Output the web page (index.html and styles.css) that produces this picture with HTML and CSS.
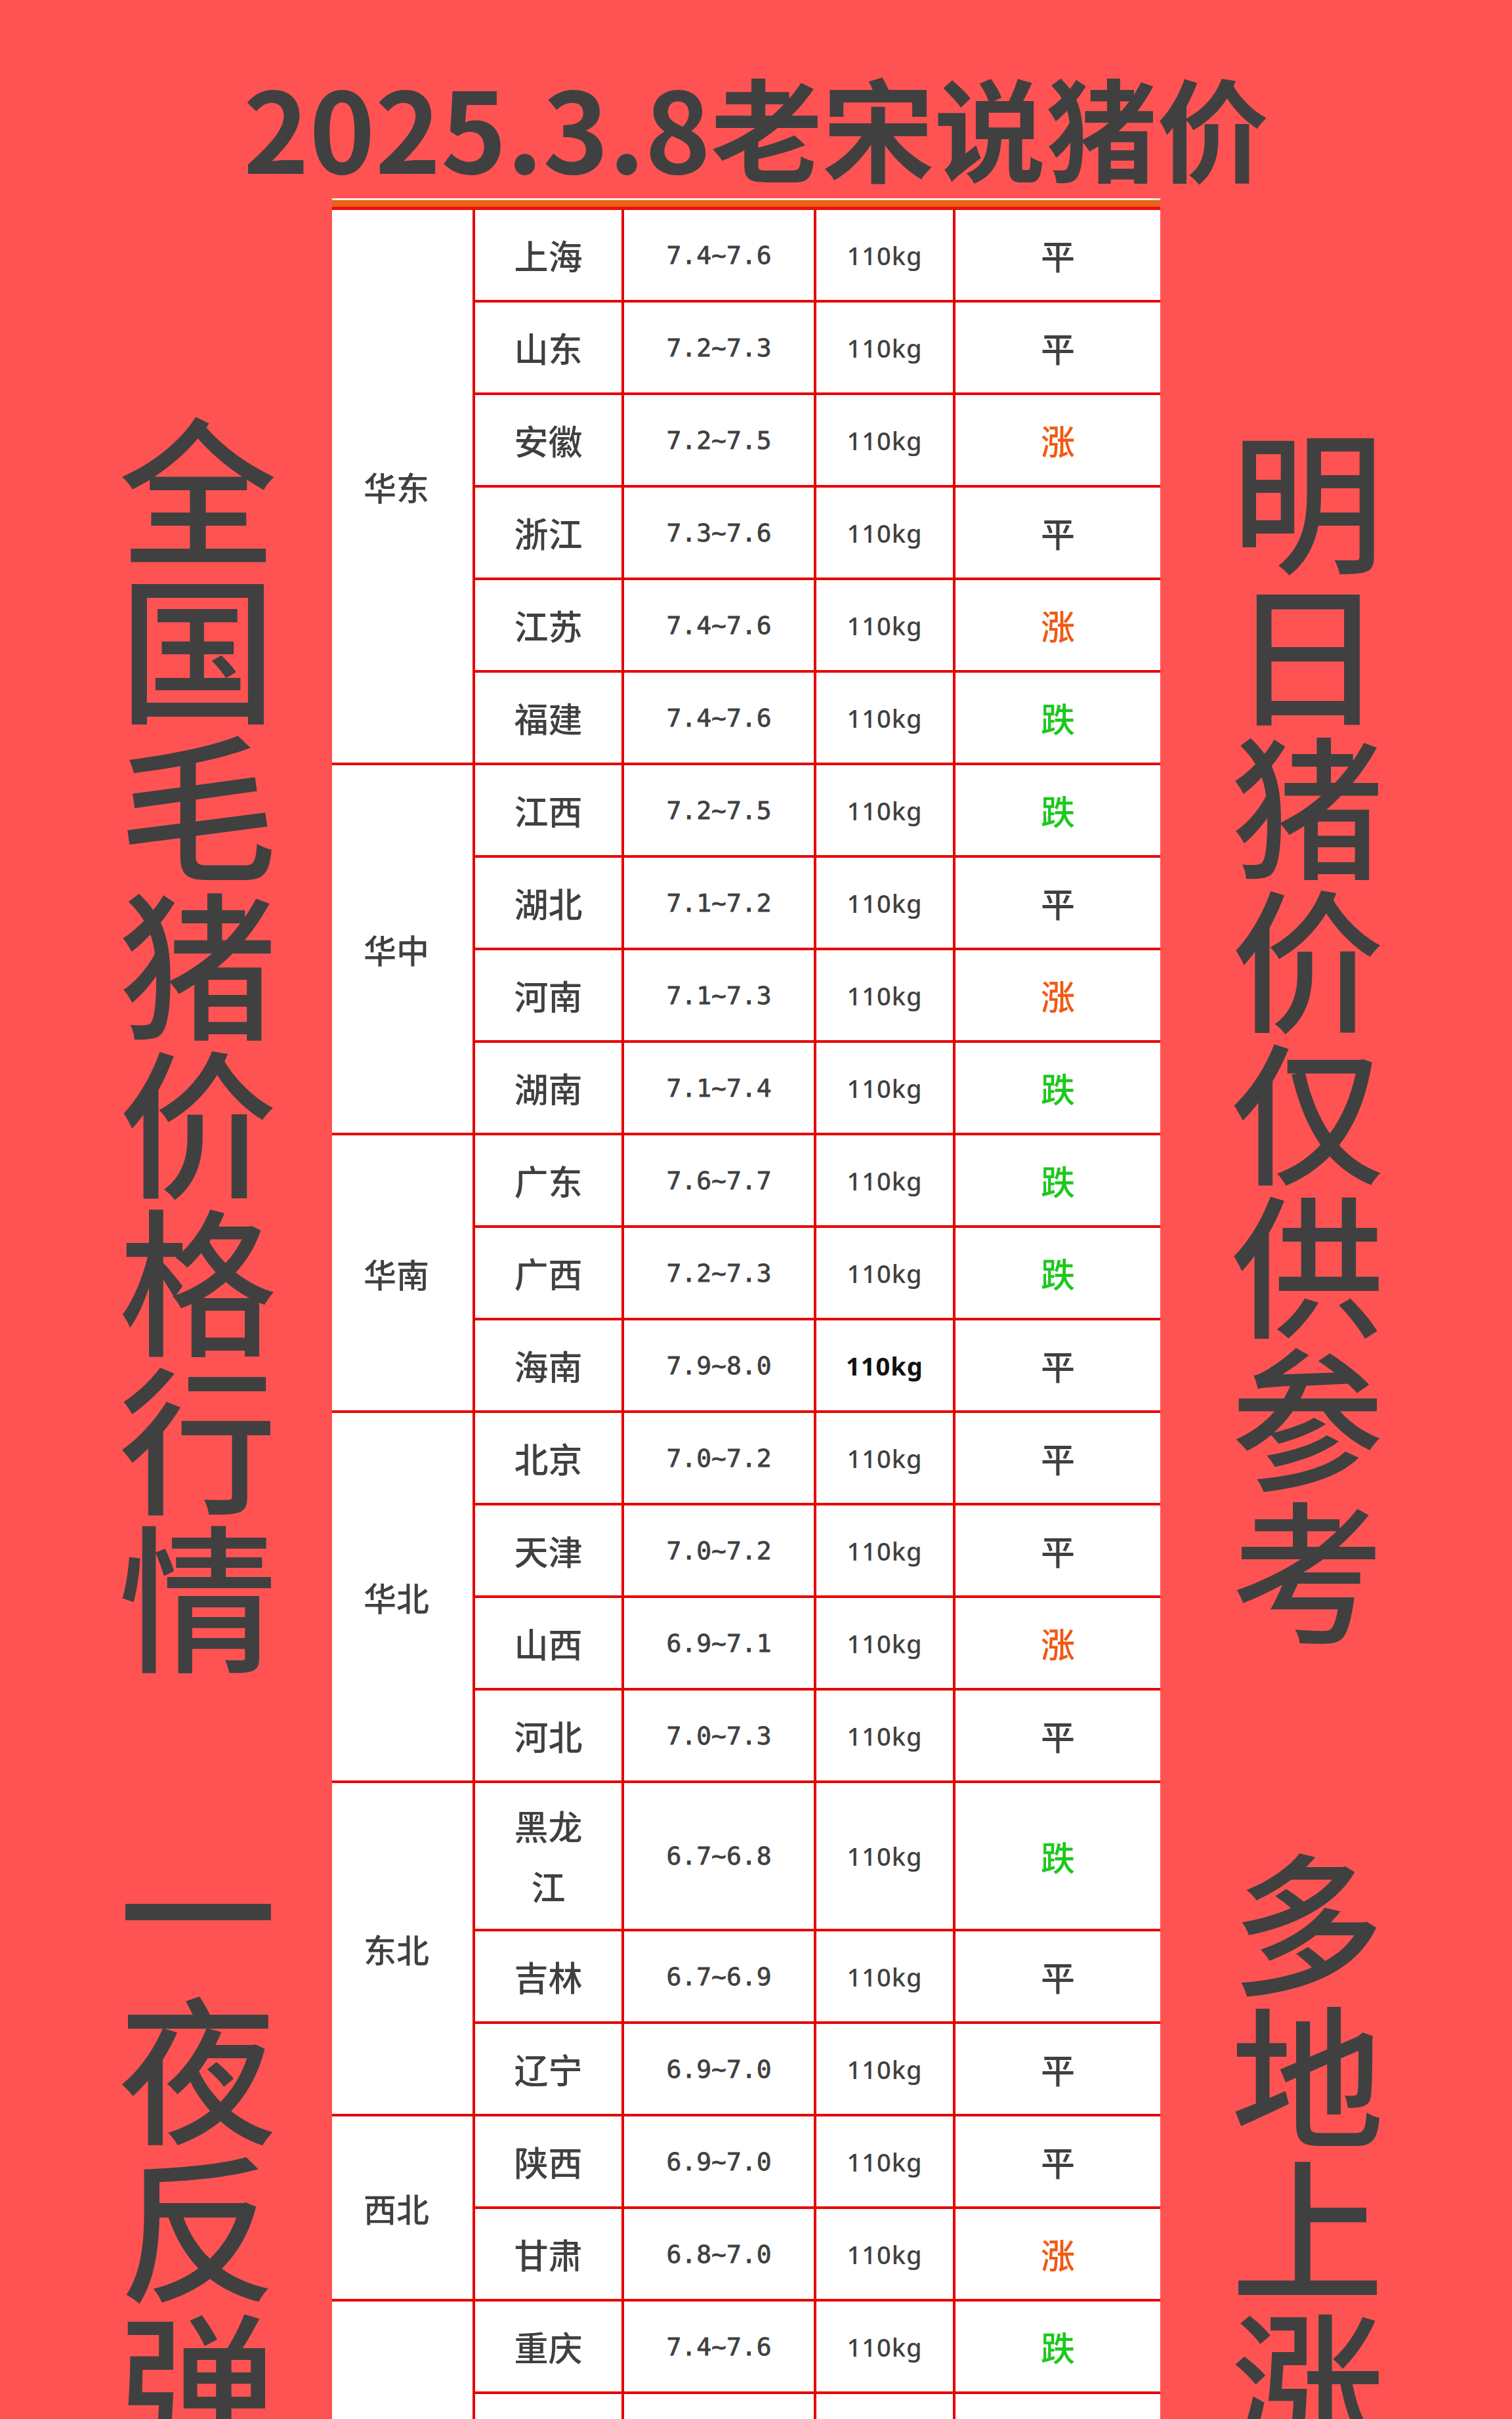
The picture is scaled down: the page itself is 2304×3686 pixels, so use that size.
FILE: index.html
```html
<!DOCTYPE html>
<html lang="zh-CN">
<head>
<meta charset="utf-8">
<title>2025.3.8老宋说猪价</title>
<link rel="stylesheet" href="styles.css">
</head>
<body>
<div class="page">
  <h1 class="title">2025.3.8老宋说猪价</h1>
  <div class="main">
    <div class="side side-left">
      <div class="vtext">全国毛猪价格行情</div>
      <div class="vtext vtext-second">一夜反弹</div>
    </div>

    <div class="sheet">
      <div class="sheet-head"></div>

      <div class="group">
        <div class="region">华东</div>
        <div class="rows">
          <div class="row"><div class="c prov">上海</div><div class="c price">7.4~7.6</div><div class="c wt">110kg</div><div class="c trend flat">平</div></div>
          <div class="row"><div class="c prov">山东</div><div class="c price">7.2~7.3</div><div class="c wt">110kg</div><div class="c trend flat">平</div></div>
          <div class="row"><div class="c prov">安徽</div><div class="c price">7.2~7.5</div><div class="c wt">110kg</div><div class="c trend up">涨</div></div>
          <div class="row"><div class="c prov">浙江</div><div class="c price">7.3~7.6</div><div class="c wt">110kg</div><div class="c trend flat">平</div></div>
          <div class="row"><div class="c prov">江苏</div><div class="c price">7.4~7.6</div><div class="c wt">110kg</div><div class="c trend up">涨</div></div>
          <div class="row"><div class="c prov">福建</div><div class="c price">7.4~7.6</div><div class="c wt">110kg</div><div class="c trend down">跌</div></div>
        </div>
      </div>

      <div class="group">
        <div class="region">华中</div>
        <div class="rows">
          <div class="row"><div class="c prov">江西</div><div class="c price">7.2~7.5</div><div class="c wt">110kg</div><div class="c trend down">跌</div></div>
          <div class="row"><div class="c prov">湖北</div><div class="c price">7.1~7.2</div><div class="c wt">110kg</div><div class="c trend flat">平</div></div>
          <div class="row"><div class="c prov">河南</div><div class="c price">7.1~7.3</div><div class="c wt">110kg</div><div class="c trend up">涨</div></div>
          <div class="row"><div class="c prov">湖南</div><div class="c price">7.1~7.4</div><div class="c wt">110kg</div><div class="c trend down">跌</div></div>
        </div>
      </div>

      <div class="group">
        <div class="region">华南</div>
        <div class="rows">
          <div class="row"><div class="c prov">广东</div><div class="c price">7.6~7.7</div><div class="c wt">110kg</div><div class="c trend down">跌</div></div>
          <div class="row"><div class="c prov">广西</div><div class="c price">7.2~7.3</div><div class="c wt">110kg</div><div class="c trend down">跌</div></div>
          <div class="row"><div class="c prov">海南</div><div class="c price">7.9~8.0</div><div class="c wt wt-dark">110kg</div><div class="c trend flat">平</div></div>
        </div>
      </div>

      <div class="group">
        <div class="region">华北</div>
        <div class="rows">
          <div class="row"><div class="c prov">北京</div><div class="c price">7.0~7.2</div><div class="c wt">110kg</div><div class="c trend flat">平</div></div>
          <div class="row"><div class="c prov">天津</div><div class="c price">7.0~7.2</div><div class="c wt">110kg</div><div class="c trend flat">平</div></div>
          <div class="row"><div class="c prov">山西</div><div class="c price">6.9~7.1</div><div class="c wt">110kg</div><div class="c trend up">涨</div></div>
          <div class="row"><div class="c prov">河北</div><div class="c price">7.0~7.3</div><div class="c wt">110kg</div><div class="c trend flat">平</div></div>
        </div>
      </div>

      <div class="group">
        <div class="region">东北</div>
        <div class="rows">
          <div class="row row-tall"><div class="c prov prov-wrap">黑龙<br>江</div><div class="c price">6.7~6.8</div><div class="c wt">110kg</div><div class="c trend down">跌</div></div>
          <div class="row"><div class="c prov">吉林</div><div class="c price">6.7~6.9</div><div class="c wt">110kg</div><div class="c trend flat">平</div></div>
          <div class="row"><div class="c prov">辽宁</div><div class="c price">6.9~7.0</div><div class="c wt">110kg</div><div class="c trend flat">平</div></div>
        </div>
      </div>

      <div class="group">
        <div class="region">西北</div>
        <div class="rows">
          <div class="row"><div class="c prov">陕西</div><div class="c price">6.9~7.0</div><div class="c wt">110kg</div><div class="c trend flat">平</div></div>
          <div class="row"><div class="c prov">甘肃</div><div class="c price">6.8~7.0</div><div class="c wt">110kg</div><div class="c trend up">涨</div></div>
        </div>
      </div>

      <div class="group">
        <div class="region">西南</div>
        <div class="rows">
          <div class="row"><div class="c prov">重庆</div><div class="c price">7.4~7.6</div><div class="c wt">110kg</div><div class="c trend down">跌</div></div>
          <div class="row"><div class="c prov">四川</div><div class="c price">7.3~7.5</div><div class="c wt">110kg</div><div class="c trend flat">平</div></div>
          <div class="row"><div class="c prov">贵州</div><div class="c price">7.2~7.4</div><div class="c wt">110kg</div><div class="c trend flat">平</div></div>
          <div class="row"><div class="c prov">云南</div><div class="c price">7.1~7.3</div><div class="c wt">110kg</div><div class="c trend flat">平</div></div>
        </div>
      </div>
    </div>

    <div class="side side-right">
      <div class="vtext vtext-r">明日猪价仅供参考</div>
      <div class="vtext vtext-r vtext-r-second">多地上涨</div>
    </div>
  </div>
</div>
</body>
</html>
```

FILE: styles.css
```css
html, body {
  margin: 0;
  padding: 0;
  background: #ff5353;
}

.page {
  width: 2304px;
  height: 3686px;
  overflow: hidden;
  background: #ff5353;
  color: #404040;
  font-family: "Noto Sans CJK SC", "Noto Sans", sans-serif;
}

.title {
  margin: 0;
  padding-top: 106px;
  height: 170px;
  font-size: 170px;
  line-height: 170px;
  font-weight: 700;
  text-align: center;
  color: #404040;
  white-space: nowrap;
}

.main {
  margin-top: 26px;
  display: flex;
  align-items: flex-start;
}

.side {
  flex: none;
  display: flex;
  flex-direction: column;
  align-items: flex-start;
}

.side-left {
  width: 506px;
  box-sizing: border-box;
  padding-top: 328px;
  padding-left: 181px;
}

.side-right {
  width: 536px;
  box-sizing: border-box;
  padding-top: 348px;
  padding-left: 108px;
}

.vtext {
  writing-mode: vertical-rl;
  text-orientation: upright;
  font-size: 241px;
  line-height: 241px;
  font-weight: 500;
  color: #404040;
  white-space: nowrap;
}

.vtext-second {
  margin-top: 237px;
}

.vtext-r {
  font-size: 233px;
  line-height: 233px;
}

.vtext-r-second {
  margin-top: 303px;
}

/* table */
.sheet {
  flex: none;
  width: 1262px;
  background: #ffffff;
}

.sheet-head {
  height: 18px;
  background: linear-gradient(to bottom,
    #fbeee0 0, #fbeee0 3px,
    #e8621a 3px, #e8621a 13px,
    #ee0f0f 13px, #ee0f0f 18px);
}

.group {
  display: flex;
}

.group + .group {
  border-top: 4px solid #e80000;
}

.region {
  flex: none;
  width: 214px;
  box-sizing: border-box;
  padding-right: 18px;
  display: flex;
  align-items: center;
  justify-content: center;
  font-size: 50px;
  font-weight: 500;
  color: #404040;
}

.rows {
  flex: none;
  width: 1044px;
  border-left: 4px solid #e80000;
}

.row {
  display: flex;
  height: 137px;
}

.row + .row {
  border-top: 4px solid #e80000;
}

.row-tall {
  height: 222px;
}

.c {
  flex: none;
  display: flex;
  align-items: center;
  justify-content: center;
  text-align: center;
  color: #404040;
}

.c + .c {
  border-left: 4px solid #e80000;
}

.prov {
  width: 223px;
  font-size: 52px;
  font-weight: 500;
}

.prov-wrap {
  line-height: 92px;
}

.price {
  width: 289px;
  font-family: "DejaVu Sans Mono", monospace;
  font-size: 38px;
  font-weight: 400;
  color: #404040;
  -webkit-text-stroke: 0.8px #404040;
}

.wt {
  width: 208px;
  font-family: "Noto Sans", sans-serif;
  font-size: 38px;
  font-weight: 500;
  letter-spacing: 1px;
  color: #404040;
}

.wt-dark {
  color: #111111;
  font-weight: 700;
}

.trend {
  width: 312px;
  font-size: 52px;
  font-weight: 500;
}

.flat {
  color: #404040;
}

.up {
  color: #f05a14;
}

.down {
  color: #1ec81e;
}
```
